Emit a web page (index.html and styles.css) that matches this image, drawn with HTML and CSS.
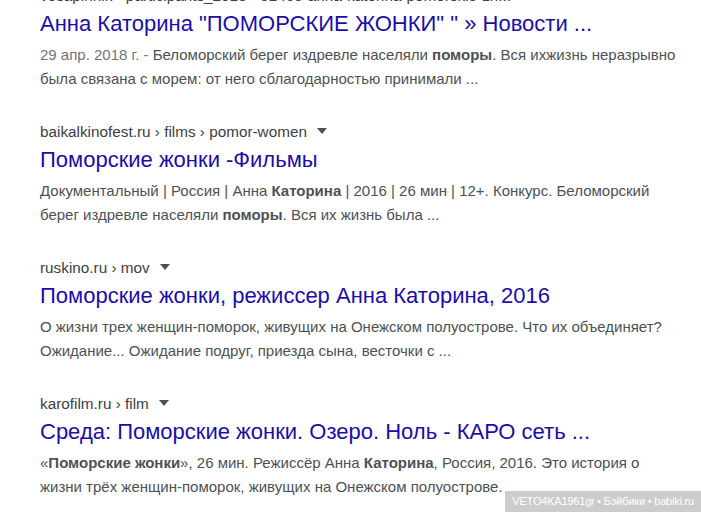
FILE: index.html
```html
<!DOCTYPE html>
<html lang="ru">
<head>
<meta charset="utf-8">
<link rel="stylesheet" href="styles.css">
</head>
<body>
<main class="results">
  <div class="result first">
    <div class="cite">vesapinnik › participants_2018 › 52469-anna-katorina-pomorskie-zh...</div>
    <a class="title">Анна Каторина "ПОМОРСКИЕ ЖОНКИ" " » Новости ...</a>
    <div class="snippet"><span class="date">29 апр. 2018 г. - </span>Беломорский берег издревле населяли <b>поморы</b>. Вся ихжизнь неразрывно была связана с морем: от него сблагодарностью принимали ...</div>
  </div>
  <div class="result">
    <div class="cite">baikalkinofest.ru › films › pomor-women <span class="arrow"></span></div>
    <a class="title">Поморские жонки -Фильмы</a>
    <div class="snippet">Документальный | Россия | Анна <b>Каторина</b> | 2016 | 26 мин | 12+. Конкурс. Беломорский берег издревле населяли <b>поморы</b>. Вся их жизнь была ...</div>
  </div>
  <div class="result">
    <div class="cite">ruskino.ru › mov <span class="arrow"></span></div>
    <a class="title">Поморские жонки, режиссер Анна Каторина, 2016</a>
    <div class="snippet">О жизни трех женщин-поморок, живущих на Онежском полуострове. Что их объединяет? Ожидание... Ожидание подруг, приезда сына, весточки с ...</div>
  </div>
  <div class="result">
    <div class="cite">karofilm.ru › film <span class="arrow"></span></div>
    <a class="title">Среда: Поморские жонки. Озеро. Ноль - КАРО сеть ...</a>
    <div class="snippet">«<b>Поморские жонки</b>», 26 мин. Режиссёр Анна <b>Каторина</b>, Россия, 2016. Это история о жизни трёх женщин-поморок, живущих на Онежском полуострове.</div>
  </div>
</main>
<div class="watermark">VETO4KA1961gr • Бэйбики • babiki.ru</div>
</body>
</html>
```
FILE: styles.css
```css
html, body {
  margin: 0;
  padding: 0;
  background: #ffffff;
  overflow: hidden;
}
body {
  width: 701px;
  height: 512px;
  position: relative;
  font-family: "Liberation Sans", Arial, sans-serif;
}
.results {
  padding-left: 40px;
  width: 638px;
  margin-top: -14px;
}
.result {
  display: flex;
  flex-direction: column;
  margin-bottom: 32px;
}
.cite {
  font-size: 15.3px;
  line-height: 20px;
  color: #3c4043;
  margin-bottom: 4px;
  white-space: nowrap;
}
.arrow {
  display: inline-block;
  width: 0;
  height: 0;
  border-left: 5px solid transparent;
  border-right: 5px solid transparent;
  border-top: 6px solid #4d5156;
  margin-left: 6px;
  vertical-align: 3px;
}
.title {
  font-size: 22px;
  line-height: 28px;
  color: #1a0dab;
  margin-bottom: 5px;
  white-space: nowrap;
}
.snippet {
  font-size: 15px;
  line-height: 23.5px;
  color: #4d5156;
}
.snippet b {
  color: #4d5156;
  font-weight: bold;
}
.date {
  color: #70757a;
}
.watermark {
  position: absolute;
  right: 0;
  bottom: 0;
  height: 21px;
  padding: 0 7px 0 7px;
  background: rgba(200, 200, 200, 0.92);
  color: #ffffff;
  font-size: 11px;
  letter-spacing: -0.2px;
  line-height: 21px;
  font-family: "Liberation Sans", Arial, sans-serif;
}
```
